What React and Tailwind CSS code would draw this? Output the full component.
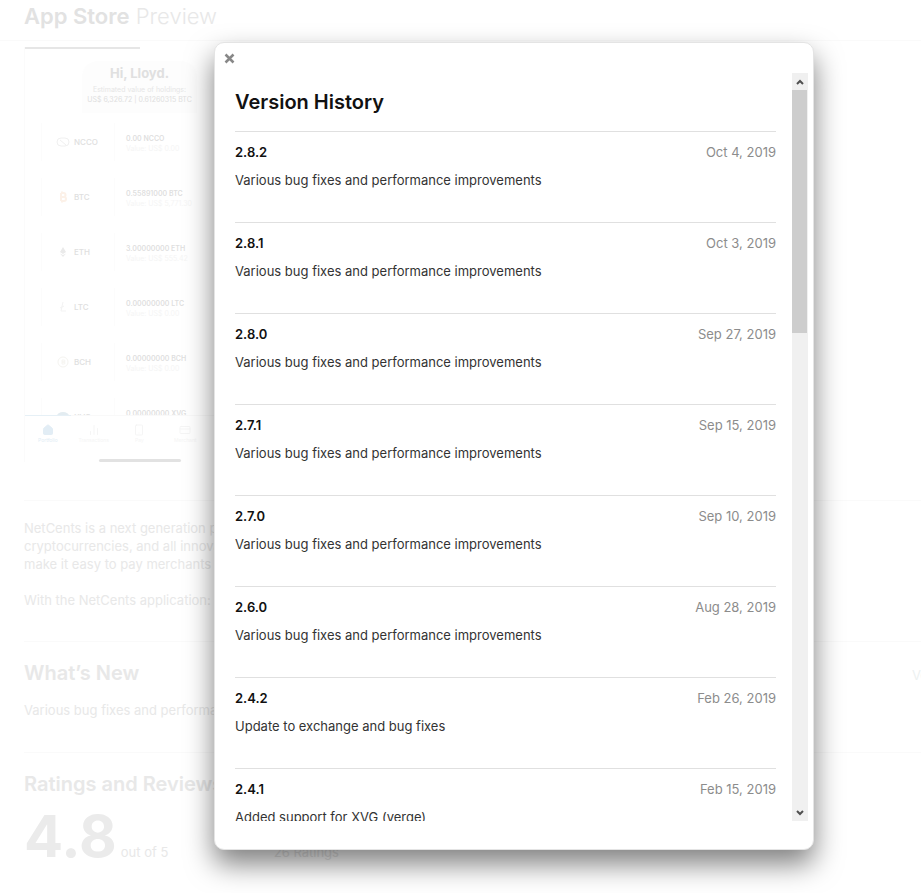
import React from 'react';
import { Home, BarChart2, Smartphone, CreditCard, User } from 'lucide-react';

const versions = [
    { version: '2.8.2', date: 'Oct 4, 2019', notes: 'Various bug fixes and performance improvements' },
    { version: '2.8.1', date: 'Oct 3, 2019', notes: 'Various bug fixes and performance improvements' },
    { version: '2.8.0', date: 'Sep 27, 2019', notes: 'Various bug fixes and performance improvements' },
    { version: '2.7.1', date: 'Sep 15, 2019', notes: 'Various bug fixes and performance improvements' },
    { version: '2.7.0', date: 'Sep 10, 2019', notes: 'Various bug fixes and performance improvements' },
    { version: '2.6.0', date: 'Aug 28, 2019', notes: 'Various bug fixes and performance improvements' },
    { version: '2.4.2', date: 'Feb 26, 2019', notes: 'Update to exchange and bug fixes' },
    { version: '2.4.1', date: 'Feb 15, 2019', notes: 'Added support for XVG (verge)' },
];

const coins = [
    { code: 'NCCO', amount: '0.00 NCCO', value: 'Value: US$ 0.00' },
    { code: 'BTC', amount: '0.55891000 BTC', value: 'Value: US$ 5,771.30' },
    { code: 'ETH', amount: '3.00000000 ETH', value: 'Value: US$ 555.42' },
    { code: 'LTC', amount: '0.00000000 LTC', value: 'Value: US$ 0.00' },
    { code: 'BCH', amount: '0.00000000 BCH', value: 'Value: US$ 0.00' },
    { code: 'XVG', amount: '0.00000000 XVG', value: 'Value: US$ 0.00' },
];

const tabs = [
    { label: 'Portfolio', icon: Home, active: true },
    { label: 'Transactions', icon: BarChart2 },
    { label: 'Pay', icon: Smartphone },
    { label: 'Merchant', icon: CreditCard },
    { label: 'Account', icon: User },
];

const CoinIcon = ({ code }) => (
    <svg width="14" height="14" viewBox="0 0 14 14" fill="none" stroke="#f0f0f0" className="shrink-0">
        {code === 'NCCO' && (
            <>
                <rect x="1" y="3" width="12" height="8" rx="4" />
                <path d="M4 5l6 5" />
            </>
        )}
        {code === 'BTC' && <path d="M5 3v8M5 3h2.500a2 2 0 0 1 0 4H5h3a2 2 0 0 1 0 4H5M6 1.500V3M6 11v1.500" stroke="#fcf1e8" strokeWidth="2" />}
        {code === 'ETH' && <path d="M7 2l3 5-3 2-3-2zM4 8.500L7 12l3-3.500-3 1.500z" fill="#eaeaea" stroke="none" />}
        {code === 'LTC' && <path d="M7 2L5 11h5M4 8l4-2" stroke="#f3f3f3" />}
        {code === 'BCH' && (
            <>
                <circle cx="7" cy="7" r="5" stroke="#f5f4f0" />
                <path d="M6 5h2a1 1 0 0 1 0 2H6h2a1 1 0 0 1 0 2H6z" stroke="#f5f4f0" />
            </>
        )}
        {code === 'XVG' && <path d="M1 6a6 4 0 0 1 12 0z" fill="#e3ecf1" stroke="none" />}
    </svg>
);

const PhoneScreenshot = () => (
    <div className="w-[230px] h-[415px] flex flex-col border-l border-[#fbfbfb]">
        <div className="w-[115px] h-[2px] bg-[#e6e6e6]" />
        <div className="mx-auto mt-3 mb-[10px] h-[52px] w-[115px] flex flex-col items-center whitespace-nowrap bg-[#fdfdfd] rounded-t-2xl">
            <div className="text-[13px] leading-4 font-bold text-[#e0e0e0] mt-1">Hi, Lloyd.</div>
            <div className="text-[7px] leading-[10px] text-[#e6e6e6] mt-1">Estimated value of holdings:</div>
            <div className="text-[7px] leading-[10px] text-[#e0e0e0]">US$ 6,326.72 | 0.61260315 BTC</div>
        </div>
        <div className="h-[292px] flex flex-col overflow-hidden">
            {coins.map((coin) => (
                <div key={coin.code} className="h-[55px] shrink-0 flex items-start pl-4">
                    <div className="w-[74px] h-[38px] pl-[14px] flex items-center gap-1 border-l border-r border-[#fcfcfc] text-[8px] font-medium text-[#e0e0e0]">
                        <CoinIcon code={coin.code} />
                        <span>{coin.code}</span>
                    </div>
                    <div className="pl-[11px] pt-[10px] whitespace-nowrap">
                        <div className="text-[7px] leading-3 font-semibold text-[#dfdfdf]">{coin.amount}</div>
                        <div className="text-[7px] leading-2 text-[#f5f5f5]">{coin.value}</div>
                    </div>
                </div>
            ))}
        </div>
        <div className="h-px bg-[linear-gradient(to_right,#e6f0f6_46px,#f9f9f9_46px)]" />
        <div className="grid grid-cols-5 pt-2">
            {tabs.map(({ label, icon: Icon, active }) => (
                <div key={label} className={`flex flex-col items-center text-[5px] leading-2 ${active ? 'text-[#e2edf5]' : 'text-[#f5f5f5]'}`}>
                    <Icon size={12} fill={active ? 'currentColor' : 'none'} />
                    {label}
                </div>
            ))}
        </div>
        <div className="w-[82px] h-[3px] rounded-full bg-[#e2e2e2] mx-auto mt-auto" />
    </div>
);

const StorePage = () => (
    <div className="h-full overflow-hidden text-[13px] leading-[18px] text-[#e8e8e8]">
        <header className="h-[41px] px-6 border-b border-[#fafafa] text-[22px] leading-8">
            <span className="font-semibold text-[#e2e2e2]">App Store</span> <span className="font-light">Preview</span>
        </header>
        <main className="pl-6">
            <section className="pt-[6px] h-[459px]">
                <PhoneScreenshot />
            </section>
            <section className="border-t border-[#fafafa] h-[141px] pt-[18px]">
                <p>NetCents is a next generation payments</p>
                <p>cryptocurrencies, and all innovative</p>
                <p>make it easy to pay merchants online.</p>
                <p className="mt-[18px]">With the NetCents application:</p>
            </section>
            <section className="border-t border-[#fafafa] h-[111px] pt-[17px]">
                <div className="flex items-baseline justify-between">
                    <h2 className="text-[20px] leading-7 font-semibold">What’s New</h2>
                    <a href="#history" className="w-[9px] overflow-hidden whitespace-nowrap text-[#edf1f1]">Version History</a>
                </div>
                <p className="mt-[14px]">Various bug fixes and performance</p>
            </section>
            <section className="border-t border-[#fafafa] pt-[17px]">
                <h2 className="text-[20px] leading-7 font-semibold">Ratings and Reviews</h2>
                <div className="flex items-baseline">
                    <span className="text-[58px] leading-[76px] font-bold text-[#ebebeb]">4.8</span>
                    <span className="pl-1 w-[157px]">out of 5</span>
                    <span>26 Ratings</span>
                </div>
            </section>
        </main>
    </div>
);

const Scrollbar = () => (
    <div className="w-4 flex flex-col bg-[#f0f0f0] text-[#505050]">
        <button type="button" aria-label="Scroll up" className="h-[17px] flex items-center justify-center">
            <svg width="8" height="6" viewBox="0 0 8 6" fill="none" stroke="currentColor" strokeWidth="2">
                <path d="M1 5l3-3 3 3" />
            </svg>
        </button>
        <div className="flex-1">
            <div className="w-[15px] h-[34%] bg-[#cdcdcd]" />
        </div>
        <button type="button" aria-label="Scroll down" className="h-[17px] flex items-center justify-center">
            <svg width="8" height="6" viewBox="0 0 8 6" fill="none" stroke="currentColor" strokeWidth="2">
                <path d="M1 1l3 3 3-3" />
            </svg>
        </button>
    </div>
);

const VersionHistory = () => (
    <div role="dialog" aria-label="Version History" className="w-[600px] flex flex-col bg-white border border-[#e4e4e4] rounded-[10px] shadow-[0_14px_28px_rgba(0,0,0,0.5)] pb-7">
        <div className="h-[30px] shrink-0 pl-[9px] pt-[10px]">
            <button type="button" aria-label="Close" className="block text-[#888888]">
                <svg width="11" height="11" viewBox="0 0 11 11" fill="none" stroke="currentColor" strokeWidth="2.500">
                    <path d="M1.500 1.500l8 8M9.500 1.500l-8 8" />
                </svg>
            </button>
        </div>
        <div className="flex-1 min-h-0 flex justify-between pl-5 pr-[5px]">
            <div className="flex-1 mr-4 overflow-hidden">
                <h1 className="pt-[15px] pb-[15px] text-[20px] leading-7 font-semibold text-[#111111]">Version History</h1>
                <ul>
                    {versions.map((item) => (
                        <li key={item.version} className="h-[91px] border-t border-[#e0e0e0] pt-[11px] text-[13px] leading-[18px]">
                            <div className="flex justify-between">
                                <h4 className="font-semibold text-[#111111]">{item.version}</h4>
                                <time className="text-[#8c8c8c]">{item.date}</time>
                            </div>
                            <p className="mt-[10px] text-[#333333]">{item.notes}</p>
                        </li>
                    ))}
                </ul>
            </div>
            <Scrollbar />
        </div>
    </div>
);

export default function App() {
    return (
        <div className="relative h-screen overflow-hidden bg-white font-['Inter',sans-serif]">
            <StorePage />
            <div className="absolute inset-0 flex pl-[214px] pt-[42px] pb-[43px]">
                <VersionHistory />
            </div>
        </div>
    );
}
